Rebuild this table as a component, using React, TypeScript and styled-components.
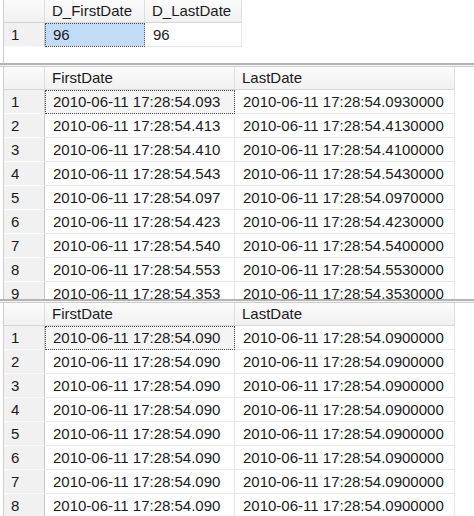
import React from "react";
import styled, { createGlobalStyle } from "styled-components";

const Global = createGlobalStyle`
  html, body { margin: 0; padding: 0; background: #ffffff; }
  body { font-family: "Liberation Sans", Arial, sans-serif; }
`;

const Window = styled.div`
  width: 474px;
  height: 516px;
  overflow: hidden;
  display: flex;
  flex-direction: column;
  background: #ffffff;
`;

const Pane = styled.div<{ $h: number }>`
  height: ${(p) => p.$h}px;
  flex: none;
  overflow: hidden;
  margin-left: 3px;
  border-left: 1px solid #cfcfcf;
  background: #ffffff;
`;

const Splitter = styled.div<{ $h: number }>`
  height: ${(p) => p.$h}px;
  flex: none;
  box-sizing: border-box;
  border-top: 2px solid #b4b4b4;
  border-bottom: 1px solid #cdcdcd;
  background: #f4f4f4;
`;

const Grid = styled.div<{ $cols: string }>`
  display: grid;
  grid-template-columns: ${(p) => p.$cols};
  grid-auto-rows: auto;
  font-size: 15px;
  color: #1b1b1b;
`;

const HeadCell = styled.div<{ $corner?: boolean }>`
  height: 23px;
  box-sizing: border-box;
  line-height: 22px;
  padding-left: 7px;
  white-space: nowrap;
  overflow: hidden;
  background: linear-gradient(#fbfbfb, #f1f1f1);
  border-right: 1px solid #dedede;
  border-bottom: 1px solid #d6d6d6;
`;

const RowHead = styled.div`
  height: 24px;
  box-sizing: border-box;
  line-height: 24px;
  padding-left: 7px;
  background: #f1f1f1;
  border-right: 1px solid #c9c9c9;
  border-bottom: 1px solid #fafafa;
`;

const Cell = styled.div<{ $sel?: boolean; $focus?: boolean }>`
  height: 24px;
  box-sizing: border-box;
  line-height: 24px;
  padding-left: 8px;
  white-space: nowrap;
  overflow: hidden;
  background: ${(p) => (p.$sel ? "#c2dcf7" : p.$focus ? "#f4f4f4" : "#ffffff")};
  border-right: 1px solid #e6e6e6;
  border-bottom: 1px solid #e6e6e6;
  outline: ${(p) => (p.$sel || p.$focus ? "1px dotted #505050" : "none")};
  outline-offset: -1px;
`;

type Row = [string, string];

const base = "2010-06-11 17:28:54.";

const rows2: Row[] = ["093", "413", "410", "543", "097", "423", "540", "553", "353"].map(
  (m) => [base + m, base + m + "0000"]
);
const rows3: Row[] = Array.from({ length: 8 }, () => [base + "090", base + "0900000"] as Row);

function ResultGrid({
  cols,
  headers,
  rows,
  selected,
}: {
  cols: string;
  headers: [string, string];
  rows: Row[];
  selected?: boolean;
}) {
  return (
    <Grid $cols={cols}>
      <HeadCell $corner />
      <HeadCell>{headers[0]}</HeadCell>
      <HeadCell>{headers[1]}</HeadCell>
      {rows.map((r, i) => (
        <React.Fragment key={i}>
          <RowHead>{i + 1}</RowHead>
          <Cell $sel={selected && i === 0} $focus={!selected && i === 0}>
            {r[0]}
          </Cell>
          <Cell>{r[1]}</Cell>
        </React.Fragment>
      ))}
    </Grid>
  );
}

export default function App() {
  return (
    <>
      <Global />
      <Window>
        <Pane $h={63}>
          <ResultGrid
            cols="41px 100px 97px"
            headers={["D_FirstDate", "D_LastDate"]}
            rows={[["96", "96"]]}
            selected
          />
        </Pane>
        <Splitter $h={4} />
        <Pane $h={232}>
          <ResultGrid cols="41px 190px 220px" headers={["FirstDate", "LastDate"]} rows={rows2} />
        </Pane>
        <Splitter $h={4} />
        <Pane $h={213}>
          <ResultGrid cols="41px 190px 220px" headers={["FirstDate", "LastDate"]} rows={rows3} />
        </Pane>
      </Window>
    </>
  );
}
